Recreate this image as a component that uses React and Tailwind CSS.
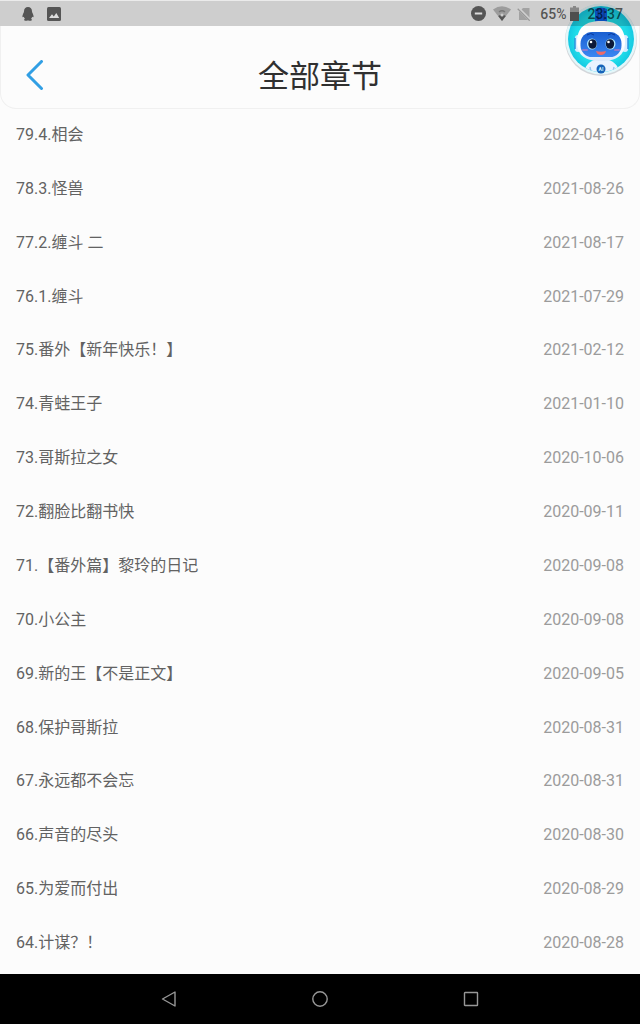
import React from "react";

const chapters = [
  { title: "79.4.相会", date: "2022-04-16" },
  { title: "78.3.怪兽", date: "2021-08-26" },
  { title: "77.2.缠斗 二", date: "2021-08-17" },
  { title: "76.1.缠斗", date: "2021-07-29" },
  { title: "75.番外【新年快乐！】", date: "2021-02-12" },
  { title: "74.青蛙王子", date: "2021-01-10" },
  { title: "73.哥斯拉之女", date: "2020-10-06" },
  { title: "72.翻脸比翻书快", date: "2020-09-11" },
  { title: "71.【番外篇】黎玲的日记", date: "2020-09-08" },
  { title: "70.小公主", date: "2020-09-08" },
  { title: "69.新的王【不是正文】", date: "2020-09-05" },
  { title: "68.保护哥斯拉", date: "2020-08-31" },
  { title: "67.永远都不会忘", date: "2020-08-31" },
  { title: "66.声音的尽头", date: "2020-08-30" },
  { title: "65.为爱而付出", date: "2020-08-29" },
  { title: "64.计谋？！", date: "2020-08-28" },
];

const StatusBar = () => (
  <div className="relative z-10 flex h-[26px] items-center justify-between border-t border-white/60 bg-black/18 pl-[22px] pr-[17px] text-sm font-medium text-black/60">
    <div className="flex items-center gap-[13px]">
      <svg className="h-[14px] w-3" viewBox="0 0 12 14" fill="#555555" aria-hidden="true">
        <path d="M6 0C3.5 0 2 1.8 2 4.4C2 5.6 .5 7.2 .4 9.3C.4 10.6 1 10.5 1.8 9.8C2 10.8 2.5 11.4 3 11.8C2.2 12.1 1.8 13 2.5 13.4C3.5 14 5.4 13.7 6 13.2C6.6 13.7 8.5 14 9.5 13.4C10.2 13 9.8 12.1 9 11.8C9.5 11.4 10 10.8 10.2 9.8C11 10.5 11.6 10.6 11.6 9.3C11.5 7.2 10 5.6 10 4.4C10 1.8 8.5 0 6 0Z" />
      </svg>
      <svg className="h-[14px] w-[14px]" viewBox="0 0 14 14" aria-hidden="true">
        <rect width="14" height="14" rx="1.5" fill="#555555" />
        <path d="M2 11L5 7.2L6.8 9.5L9.3 6L12.2 11Z" fill="#dcdcdc" />
      </svg>
    </div>
    <div className="flex items-center">
      <svg className="mr-[7px] h-[15px] w-[15px]" viewBox="0 0 15 15" aria-hidden="true">
        <circle cx="7.5" cy="7.5" r="7.5" fill="#555555" />
        <path d="M3.8 7.5H11.2" stroke="#dcdcdc" strokeWidth="2" />
      </svg>
      <svg className="mr-[6px] h-[15px] w-[18px]" viewBox="0 0 18 15" aria-hidden="true">
        <path d="M0 3.5Q9 -3 18 3.5L9 15Z" fill="#9c9c9c" />
        <path d="M5.2 10.1Q9 7 12.8 10.1L9 15Z" fill="#555555" />
        <path d="M6 6Q9 3.5 12 6" fill="none" stroke="#777777" strokeWidth="1.4" />
        <circle cx="9" cy="9" r="1.6" fill="#cccccc" />
      </svg>
      <svg className="mr-[9px] h-[14px] w-[14px]" viewBox="0 0 14 14" aria-hidden="true">
        <path d="M6 1H12.5V13H2V5Z" fill="#a2a2a2" />
        <path d="M.7 .7L13.3 13.3" stroke="#d0d0d0" strokeWidth="3" />
        <path d="M.7 1.7L12.7 13.7" stroke="#999999" strokeWidth="1.3" />
      </svg>
      <span>65%</span>
      <svg className="ml-1 mr-2 h-[15px] w-[9px]" viewBox="0 0 9 15" aria-hidden="true">
        <path d="M3 0H6V1.5H9V6H0V1.5H3Z" fill="#888888" />
        <rect y="6" width="9" height="9" fill="#4e4e4e" />
      </svg>
      <span>23:37</span>
    </div>
  </div>
);

const Robot = () => (
  <svg viewBox="0 0 76 76" className="h-[76px] w-[76px]" aria-hidden="true">
    <defs>
      <radialGradient id="disc" cx="50%" cy="50%" r="50%">
        <stop offset="0" stopColor="#35e4ee" />
        <stop offset="0.78" stopColor="#1fdce9" />
        <stop offset="1" stopColor="#14c9e2" />
      </radialGradient>
      <linearGradient id="face" x1="0" y1="0" x2="0" y2="1">
        <stop offset="0" stopColor="#1a5fd0" />
        <stop offset="1" stopColor="#3b86f2" />
      </linearGradient>
      <linearGradient id="shell" x1="0" y1="0" x2="0" y2="1">
        <stop offset="0.6" stopColor="#ffffff" />
        <stop offset="1" stopColor="#dbe8fa" />
      </linearGradient>
      <clipPath id="inside">
        <circle cx="39" cy="38" r="33" />
      </clipPath>
    </defs>
    <circle cx="39" cy="39" r="36" fill="#d3d6da" />
    <circle cx="39" cy="38" r="35.5" fill="#e3f7fa" />
    <circle cx="39" cy="38" r="33" fill="url(#disc)" />
    <g clipPath="url(#inside)">
      <path d="M25 76V71C20 69 26 61 32 59H47C53 61 60 69 54 71V76Z" fill="#eaf3ff" />
      <path d="M28 66L30 76M52 66L50 76" stroke="#9dc6ef" strokeWidth="1.5" />
      <path d="M33 8Q39 5 45 8V22H33Z" fill="#0a62e6" />
      <path d="M36 7V19M42 7V19" stroke="#1749ad" strokeWidth="1.5" />
    </g>
    <rect x="13" y="34" width="6" height="17" rx="3" fill="#d7ecff" />
    <rect x="60" y="34" width="6" height="17" rx="3" fill="#d7ecff" />
    <path d="M13 37V48M66 37V48" stroke="#2a94df" strokeWidth="1.5" />
    <path d="M15 41C15 26 24 20 39 20C54 20 63 26 63 41C63 55 54 60 39 60C24 60 15 55 15 41Z" fill="url(#shell)" />
    <rect x="18.5" y="31" width="41" height="25" rx="11.5" fill="url(#face)" />
    <path d="M25 34Q29 31 32 34M46 34Q49 31 53 34" fill="none" stroke="#093b9d" />
    <ellipse cx="30" cy="43" rx="5" ry="5.5" fill="#b1e9ff" />
    <ellipse cx="48.5" cy="43" rx="5" ry="5.5" fill="#b1e9ff" />
    <ellipse cx="30.5" cy="43" rx="4.2" ry="4.8" fill="#0d1a39" />
    <ellipse cx="48" cy="43" rx="4.2" ry="4.8" fill="#0d1a39" />
    <circle cx="29" cy="41" r="1.3" fill="#ffffff" />
    <circle cx="46.5" cy="41" r="1.3" fill="#ffffff" />
    <path d="M21 49H25M53 49H57" stroke="#8b7bd0" strokeWidth="2" strokeLinecap="round" />
    <path d="M34 50Q39 51.5 44 50Q43 54 39 54Q35 54 34 50Z" fill="#ee6a68" />
    <circle cx="39" cy="68" r="4.5" fill="#1763b9" />
    <text x="39" y="70" fontSize="5" fontWeight="700" fill="#d7faff" textAnchor="middle">AI</text>
  </svg>
);

const Header = () => (
  <header className="relative grid h-[83px] grid-cols-[68px_1fr_68px] items-center rounded-b-2xl border-x border-b border-[#f0f0f0] bg-[#fcfcfc] pt-4">
    <button type="button" aria-label="返回" className="flex h-10 items-center justify-center">
      <svg className="h-[30px] w-[18px]" viewBox="0 0 18 30" fill="none" aria-hidden="true">
        <path d="M15.5 1.5L2 15L15.5 28.5" stroke="#319fe4" strokeWidth="3" strokeLinecap="round" strokeLinejoin="round" />
      </svg>
    </button>
    <h1 className="pt-1 text-center text-[31px] leading-10 text-[#303030]">全部章节</h1>
    {/* floating assistant, sits under the status bar */}
    <button type="button" aria-label="AI 助手" className="absolute right-px -top-[25px]">
      <Robot />
    </button>
  </header>
);

const NavigationBar = () => (
  <nav className="flex h-[50px] items-center justify-center bg-black text-[#979797]">
    <button type="button" aria-label="后退" className="flex h-full w-[151px] items-center justify-center">
      <svg className="h-4 w-4" viewBox="0 0 16 16" fill="none" stroke="currentColor" strokeWidth="1.4">
        <path d="M14 1V15L1.5 8Z" strokeLinejoin="round" />
      </svg>
    </button>
    <button type="button" aria-label="主页" className="flex h-full w-[151px] items-center justify-center">
      <svg className="h-4 w-4" viewBox="0 0 16 16" fill="none" stroke="currentColor" strokeWidth="1.4">
        <circle cx="8" cy="8" r="7.2" />
      </svg>
    </button>
    <button type="button" aria-label="最近任务" className="flex h-full w-[151px] items-center justify-center">
      <svg className="h-4 w-4" viewBox="0 0 16 16" fill="none" stroke="currentColor" strokeWidth="1.4">
        <rect x="1.5" y="1.5" width="13" height="13" rx=".5" />
      </svg>
    </button>
  </nav>
);

const App = () => {
  return (
    <div lang="zh-CN" className="flex min-h-screen flex-col bg-[#fcfcfc] font-[Roboto,'Noto_Sans_CJK_SC',sans-serif]">
      <StatusBar />
      <Header />
      <main className="flex flex-1 flex-col pb-[3px]">
        <ul className="grid flex-1 auto-rows-fr">
          {chapters.map((chapter) => (
            <li key={chapter.title}>
              <a href="#" className="flex h-full items-center justify-between px-4 pb-2.5 pt-2 text-base leading-6">
                <span className="text-[#626262]">{chapter.title}</span>
                <time dateTime={chapter.date} className="text-[#9b9b9b]">{chapter.date}</time>
              </a>
            </li>
          ))}
        </ul>
      </main>
      <NavigationBar />
    </div>
  );
};

export default App;
